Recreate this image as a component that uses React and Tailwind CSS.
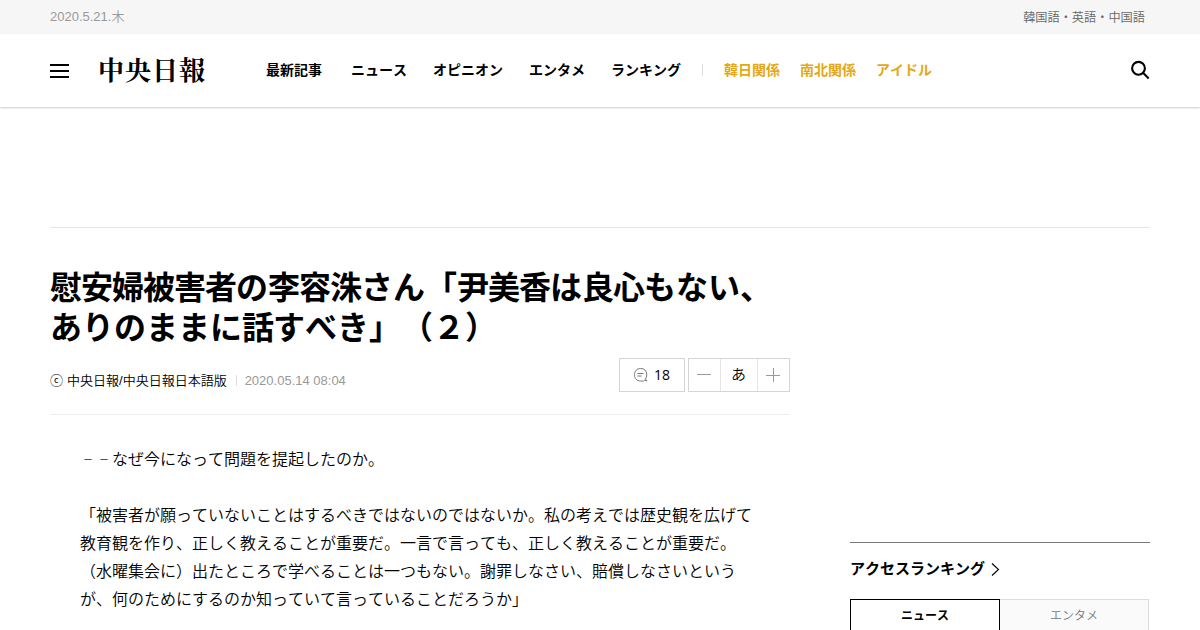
import React from "react";

const mainMenu = [
  { label: "最新記事", className: "w-[85px]" },
  { label: "ニュース", className: "w-[82px]" },
  { label: "オピニオン", className: "w-[96px]" },
  { label: "エンタメ", className: "w-[82px]" },
  { label: "ランキング", className: "w-[91px]" },
];

const topicMenu = ["韓日関係", "南北関係", "アイドル"];

const question = "なぜ今になって問題を提起したのか。";

const answerLines = [
  "「被害者が願っていないことはするべきではないのではないか。私の考えでは歴史観を広げて",
  "教育観を作り、正しく教えることが重要だ。一言で言っても、正しく教えることが重要だ。",
  "（水曜集会に）出たところで学べることは一つもない。謝罪しなさい、賠償しなさいという",
  "が、何のためにするのか知っていて言っていることだろうか」",
];

const TopBar = () => (
  <div className="h-[34px] bg-[#f6f6f6]">
    <div className="mx-auto flex h-full w-[1100px] items-center justify-between pr-[5px]">
      <span className="text-[13px] text-[#999]">2020.5.21.木</span>
      <span className="pt-[2px] text-[12.2px] text-[#666]">韓国語・英語・中国語</span>
    </div>
  </div>
);

const Header = () => (
  <header className="h-[73px] shadow-[0_1px_2px_rgba(0,0,0,0.2)]">
    <div className="mx-auto flex h-[72px] w-[1100px] items-center">
      <button className="flex w-[19px] flex-col gap-[4px] pt-px" aria-label="メニュー">
        <span className="h-[2px] bg-black" />
        <span className="h-[2px] bg-black" />
        <span className="h-[2px] bg-black" />
      </button>
      <h1 className="ml-[29px] w-[168px] pb-[2px] font-['Noto_Serif_CJK_JP','Noto_Sans_CJK_JP',serif] text-[26px] leading-none font-bold tracking-[1px]">
        中央日報
      </h1>
      <nav className="flex items-center text-[14px] font-bold">
        {mainMenu.map((item) => (
          <a key={item.label} className={item.className}>
            {item.label}
          </a>
        ))}
        <span className="mr-[21px] h-3 w-px bg-[#ddd]" />
        <div className="flex gap-5 text-[#e5a812]">
          {topicMenu.map((label) => (
            <a key={label}>{label}</a>
          ))}
        </div>
      </nav>
      <svg className="ml-auto h-5 w-5" viewBox="0 0 20 20" fill="none" stroke="#000" strokeWidth="2.1">
        <circle cx="8.5" cy="8.3" r="6.4" />
        <path d="M13 12.8 18.7 18.5" />
      </svg>
    </div>
  </header>
);

const Toolbar = () => (
  <div className="flex gap-[3px]">
    <button className="flex h-[34px] w-[66px] items-center border border-[#d5d5d5] pb-px pl-[13px] font-['Open_Sans',sans-serif] text-[14px] font-normal">
      <svg className="mr-[5px] h-4 w-4" viewBox="0 0 16 16" fill="none" stroke="#777" strokeWidth="1">
        <path d="M14 14 12.4 12.1C13.3 11 13.7 9.4 13.7 8V7.2C13.7 3.8 11.2 1.5 8 1.5h-.5C4 1.5 1.5 4.2 1.5 7.5v.7C1.5 11.7 4 14 7.5 14h3l1.2-.8L14 14Z" />
        <path d="M4.5 6.5h6M4.5 9h4" />
      </svg>
      18
    </button>
    <div className="flex h-[34px] w-[102px] border border-[#d5d5d5]">
      <button className="flex w-8 items-center justify-center border-r border-[#e5e5e5] pr-px pb-px" aria-label="縮小">
        <span className="h-px w-[14px] bg-[#999]" />
      </button>
      <span className="flex w-[37px] items-center justify-center border-r border-[#e5e5e5] pr-px text-[15px]">
        あ
      </span>
      <button className="flex flex-1 items-center justify-center pr-px" aria-label="拡大">
        <svg className="h-[14px] w-[14px]" viewBox="0 0 14 14" stroke="#999" strokeWidth="1">
          <path d="M0 7.5h14M7.5 0v14" />
        </svg>
      </button>
    </div>
  </div>
);

const Article = () => (
  <article className="w-[740px] pt-10">
    <h2 className="text-[32px] leading-10 font-bold whitespace-nowrap">
      <span className="block">
        <span className="tracking-[-1px]">慰安婦被害者</span>の
        <span className="tracking-[-1px]">李容洙</span>さん「
        <span className="tracking-[-1px]">尹美香</span>は
        <span className="tracking-[-1px]">良心</span>もない、
      </span>
      <span className="block">
        ありのままに<span className="tracking-[-1px]">話</span>すべき」（２）
      </span>
    </h2>
    <div className="flex h-[67px] items-start justify-between border-b border-[#eee] pt-[10px]">
      <div className="flex h-[45px] items-center text-[13px]">
        <span className="mr-1">ⓒ</span>
        <span>中央日報/中央日報日本語版</span>
        <span className="mx-[9px] mr-2 h-[11px] w-px bg-[#ddd]" />
        <span className="text-[#999]">2020.05.14 08:04</span>
      </div>
      <Toolbar />
    </div>
    <div className="px-[30px] pt-[31px] text-[16px] leading-7 whitespace-nowrap">
      <p className="flex">
        <span className="w-4 text-center text-[10px]">－</span>
        <span className="w-4 text-center text-[10px]">－</span>
        {question}
      </p>
      <p className="mt-7">
        {answerLines.map((line) => (
          <span key={line} className="block">
            {line}
          </span>
        ))}
      </p>
    </div>
  </article>
);

const Sidebar = () => (
  <aside className="w-[300px] pt-[314px]">
    <div className="border-t border-[#777] pt-[14px]">
      <h3 className="flex h-6 items-center text-[15px] font-bold">
        アクセスランキング
        <svg className="ml-[6px] h-[13px] w-[9px]" viewBox="0 0 9 13" fill="none" stroke="#000" strokeWidth="1.1">
          <path d="M1 .5 7.5 6.5 1 12.5" />
        </svg>
      </h3>
      <div className="mt-[18px] flex h-[34px] w-[299px] text-[12px]">
        <button className="w-[150px] border border-black font-bold">ニュース</button>
        <button className="flex-1 border border-l-0 border-[#ddd] bg-[#fafafa] text-[#777]">エンタメ</button>
      </div>
    </div>
  </aside>
);

const App = () => {
  return (
    <div className="h-[630px] overflow-hidden bg-white font-['Liberation_Sans','Noto_Sans_CJK_JP',sans-serif] font-[350] text-black [font-kerning:none] [text-spacing-trim:space-all]">
      <TopBar />
      <Header />
      <main className="mx-auto mt-[120px] flex w-[1100px] justify-between border-t border-[#e5e5e5]">
        <Article />
        <Sidebar />
      </main>
    </div>
  );
};

export default App;
